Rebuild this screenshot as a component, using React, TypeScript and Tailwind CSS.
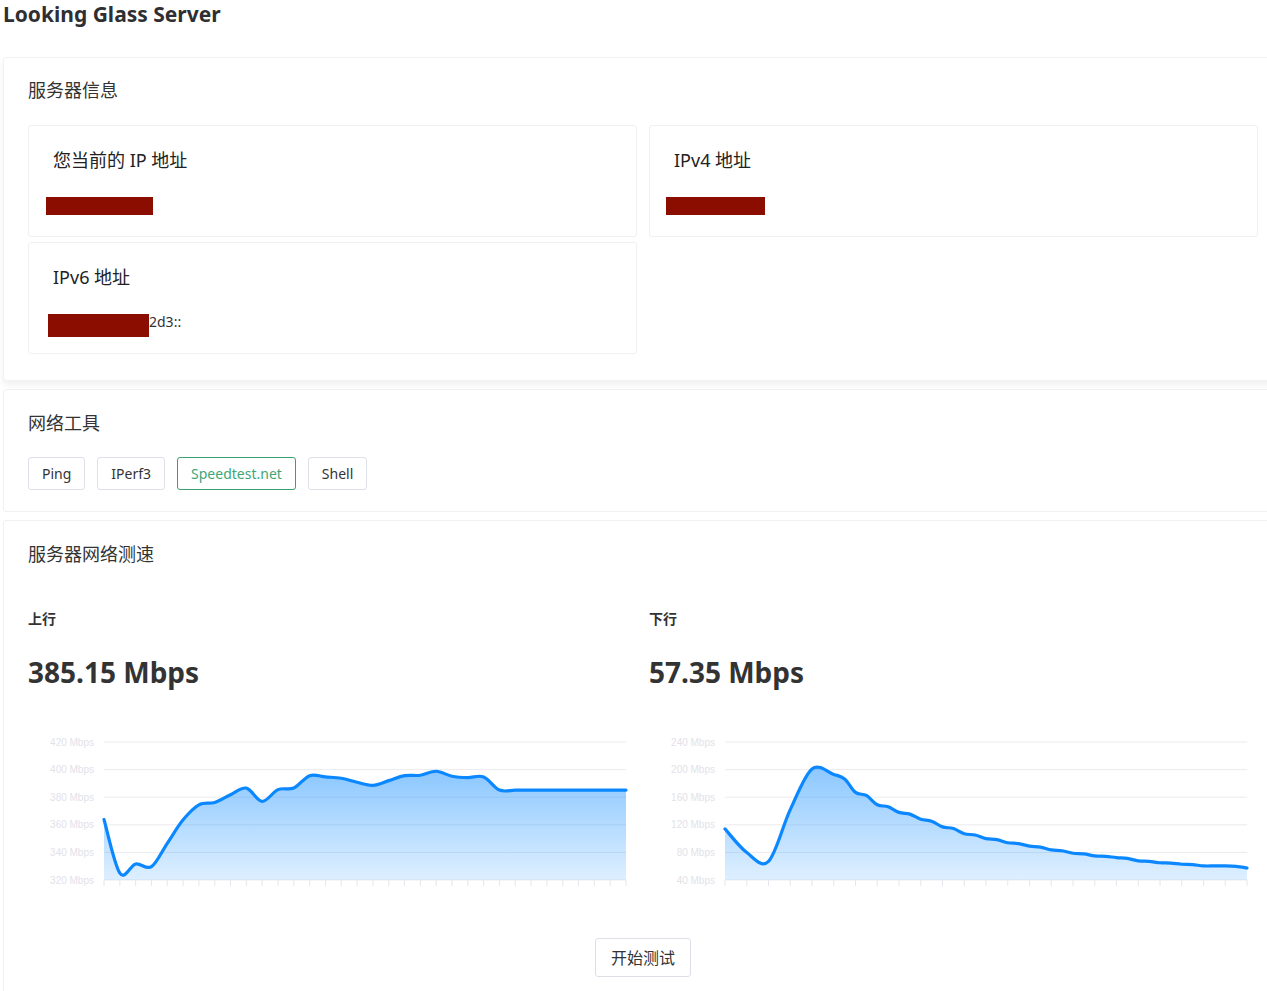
const upData = [
  363.8, 325, 331.6, 329.7, 346.6, 363.6, 374.5, 376.2, 381.8, 386.6, 377, 385.5, 386.7, 395.6, 394.7, 393.7, 390.8,
  388.6, 392, 395.6, 395.9, 398.8, 395.2, 394.2, 394.7, 385.15, 385.15, 385.15, 385.15, 385.15, 385.15, 385.15, 385.15,
  385.15,
];

const downData = [
  114, 79.8, 67, 142, 201, 193, 167, 149, 138, 128, 117, 107, 100, 94, 89, 83.6, 78.8, 74.9, 72.5, 67.7, 65, 62.8, 60.4,
  60.4, 57.35,
];

const tools = ["Ping", "IPerf3", "Speedtest.net", "Shell"];

// catmull-rom -> cubic bezier so the line looks like the chart lib's smoothing
function smoothPath(pts: [number, number][]) {
  let d = `M${pts[0][0]},${pts[0][1]}`;
  for (let i = 0; i < pts.length - 1; i++) {
    const p0 = pts[i - 1] ?? pts[i];
    const p1 = pts[i];
    const p2 = pts[i + 1];
    const p3 = pts[i + 2] ?? p2;
    const c1x = p1[0] + (p2[0] - p0[0]) / 6;
    const c1y = p1[1] + (p2[1] - p0[1]) / 6;
    const c2x = p2[0] - (p3[0] - p1[0]) / 6;
    const c2y = p2[1] - (p3[1] - p1[1]) / 6;
    d += ` C${c1x},${c1y} ${c2x},${c2y} ${p2[0]},${p2[1]}`;
  }
  return d;
}

function SpeedChart({
  id,
  data,
  min,
  max,
  step,
  kinkFrom,
}: {
  id: string;
  data: number[];
  min: number;
  max: number;
  step: number;
  kinkFrom?: number;
}) {
  const left = 76;
  const right = 598;
  const top = 12;
  const bottom = 150;
  const y = (v: number) => bottom - ((v - min) / (max - min)) * (bottom - top);
  const x = (i: number) => left + (i * (right - left)) / (data.length - 1);
  const pts: [number, number][] = [];
  data.forEach((v, i) => {
    pts.push([x(i), y(v)]);
    // small plateau between samples, gives the stepped look of the live chart
    if (kinkFrom !== undefined && i >= kinkFrom && i < data.length - 1) {
      const next = data[i + 1];
      pts.push([x(i + 0.5), y(v + (next - v) * 0.25)]);
    }
  });
  const line = smoothPath(pts);
  const area = `${line} L${right},${bottom} L${left},${bottom} Z`;
  const levels: number[] = [];
  for (let v = max; v >= min; v -= step) levels.push(v);

  return (
    <svg width="609" height="165" viewBox="0 0 609 165" className="block">
      <defs>
        <linearGradient id={id} x1="0" y1="0" x2="0" y2="1">
          <stop offset="0" stopColor="#1890ff" stopOpacity="0.5" />
          <stop offset="1" stopColor="#1890ff" stopOpacity="0.14" />
        </linearGradient>
      </defs>
      {levels.map((v) => (
        <g key={v}>
          <line x1={left} x2={right} y1={y(v)} y2={y(v)} stroke="#ebebf0" strokeWidth="1" />
          <text
            x="66"
            y={y(v) + 3.5}
            textAnchor="end"
            fontSize="10"
            fill="#e2e2e8"
            fontFamily="'Liberation Sans', Arial, sans-serif"
          >
            {v} Mbps
          </text>
        </g>
      ))}
      {data.map((_, i) => (
        <line key={i} x1={x(i)} x2={x(i)} y1={bottom} y2={bottom + 6} stroke="#e6e6ec" strokeWidth="1" />
      ))}
      <path d={area} fill={`url(#${id})`} />
      <path d={line} fill="none" stroke="#0b88ff" strokeWidth="3.2" strokeLinejoin="round" strokeLinecap="round" />
    </svg>
  );
}

function InfoCell({ label, children }: { label: string; children: React.ReactNode }) {
  return (
    <div className="h-[112px] rounded-[3px] border border-[#efeff4] bg-white pt-[22px]">
      <div className="pl-[24px] text-[18px] leading-[24px] text-[#222]">{label}</div>
      <div className="mt-[25px]">{children}</div>
    </div>
  );
}

export default function App() {
  return (
    <div className="h-[991px] overflow-hidden bg-white px-[3px] font-['Noto_Sans','Noto_Sans_CJK_SC',sans-serif] text-[#333]">
      <h1 className="text-[21px] font-bold leading-[28px] text-[#2f2f33]">Looking Glass Server</h1>

      <div className="mt-[29px] w-[1280px] rounded-[3px] border border-[#f0f0f5] bg-white px-[24px] pb-[26px] pt-[20px] shadow-[0_4px_6px_rgba(0,0,0,0.06)]">
        <div className="text-[18px] leading-[24px]">服务器信息</div>
        <div className="mt-[23px] grid w-[1230px] grid-cols-2 gap-x-[12px] gap-y-[5px]">
          <InfoCell label="您当前的 IP 地址">
            <div className="ml-[17px] h-[18px] w-[107px] bg-[#8b0d00]" />
          </InfoCell>
          <InfoCell label="IPv4 地址">
            <div className="ml-[16px] h-[18px] w-[99px] bg-[#8b0d00]" />
          </InfoCell>
          <InfoCell label="IPv6 地址">
            <div className="flex items-start">
              <div className="ml-[19px] h-[23px] w-[101px] bg-[#8b0d00]" />
              <span className="-mt-[2px] text-[14px] leading-[20px] text-[#333]">2d3::</span>
            </div>
          </InfoCell>
        </div>
      </div>

      <div className="mt-[8px] w-[1280px] rounded-[3px] border border-[#f0f0f5] bg-white px-[24px] pb-[21px] pt-[21px]">
        <div className="text-[18px] leading-[24px]">网络工具</div>
        <div className="mt-[22px] flex gap-[12px]">
          {tools.map((t) => (
            <button
              key={t}
              type="button"
              className={`h-[33px] rounded-[3px] border px-[13px] text-[14px] ${
                t === "Speedtest.net" ? "border-[#3c9f6f] text-[#3fa577]" : "border-[#dfe1e8] text-[#333]"
              }`}
            >
              {t}
            </button>
          ))}
        </div>
      </div>

      <div className="mt-[8px] w-[1280px] rounded-[3px] border border-[#f0f0f5] bg-white px-[24px] pb-[20px] pt-[21px]">
        <div className="text-[18px] leading-[24px]">服务器网络测速</div>
        <div className="grid w-[1230px] grid-cols-2 gap-x-[12px]">
          <div>
            <div className="mt-[43px] text-[14px] font-semibold leading-[20px]">上行</div>
            <div className="mt-[25px] text-[28px] font-bold leading-[36px] text-[#333]">385.15 Mbps</div>
            <div className="mt-[40px]">
              <SpeedChart id="up" data={upData} min={320} max={420} step={20} />
            </div>
          </div>
          <div>
            <div className="mt-[43px] text-[14px] font-semibold leading-[20px]">下行</div>
            <div className="mt-[25px] text-[28px] font-bold leading-[36px] text-[#333]">57.35 Mbps</div>
            <div className="mt-[40px]">
              <SpeedChart id="down" data={downData} min={40} max={240} step={40} kinkFrom={5} />
            </div>
          </div>
        </div>
        <div className="mt-[43px] flex w-[1230px] justify-center">
          <button
            type="button"
            className="h-[39px] w-[96px] rounded-[3px] border border-[#dcdfe6] text-[16px] text-[#333]"
          >
            开始测试
          </button>
        </div>
      </div>
    </div>
  );
}
